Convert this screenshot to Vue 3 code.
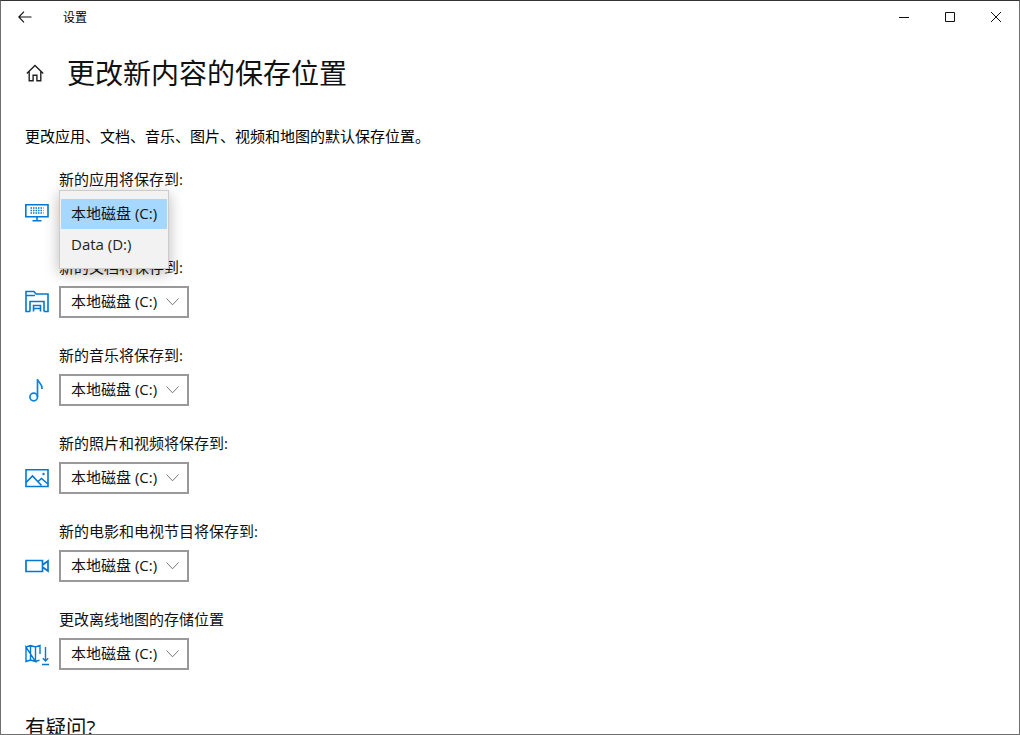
<script setup>
const rows = [
  { label: '新的应用将保存到:', icon: 'apps', open: true },
  { label: '新的文档将保存到:', icon: 'docs' },
  { label: '新的音乐将保存到:', icon: 'music' },
  { label: '新的照片和视频将保存到:', icon: 'photo' },
  { label: '新的电影和电视节目将保存到:', icon: 'video' },
  { label: '更改离线地图的存储位置', icon: 'map' },
]
</script>

<template>
  <div class="window">
    <header class="titlebar">
      <svg class="back" width="14" height="12" viewBox="0 0 14 12"><path d="M6 .6.800 6 6 11.400M.800 6H13.500" fill="none" stroke="#111" stroke-width="1.100"/></svg>
      <span class="title">设置</span>
      <div class="controls">
        <span class="ctl"><svg width="12" height="12" viewBox="0 0 12 12"><path d="M1 6.500H11" stroke="#111" fill="none"/></svg></span>
        <span class="ctl"><svg width="12" height="12" viewBox="0 0 12 12"><path d="M1.500 1.500H10.500V10.500H1.500Z" stroke="#111" fill="none"/></svg></span>
        <span class="ctl"><svg width="12" height="12" viewBox="0 0 12 12"><path d="M1 1 11 11M11 1 1 11" stroke="#111" fill="none"/></svg></span>
      </div>
    </header>

    <main class="content">
      <div class="heading">
        <svg class="home" width="18" height="18" viewBox="0 0 18 18"><path d="M.8 9.400 9 1.400l8.200 8M3.200 7.500v9.300h3.900v-5.600h3.800v5.600h3.900V7.500" fill="none" stroke="#222" stroke-width="1.400"/></svg>
        <h1>更改新内容的保存位置</h1>
      </div>
      <p class="desc">更改应用、文档、音乐、图片、视频和地图的默认保存位置。</p>

      <section v-for="row in rows" :key="row.icon" class="row">
        <div class="label">{{ row.label }}</div>
        <div class="control">
          <span class="icon">
            <svg v-if="row.icon === 'apps'" width="24" height="24" viewBox="0 0 24 24" fill="none" stroke="#0078d7" stroke-width="1.600">
              <path d="M.8 2.800H23V14.800H.8ZM12 14.800V18.500M7.500 18.800H16.500"/>
              <path d="M5.500 6H18.500M5.500 8.500H18.500M5.500 11H18.500" stroke-width="1.500" stroke-dasharray="1.500 1"/>
            </svg>
            <svg v-else-if="row.icon === 'docs'" width="24" height="24" viewBox="0 0 24 24" fill="none" stroke="#0078d7" stroke-width="1.600">
              <path d="M5 21.500H1V1.500H9L11 4H23V21.500H19M1 5.500H10"/>
              <path d="M5 21.500V11.500H19V21.500M8.500 21.500V15.500H15.500V21.500M8 18.500H16"/>
            </svg>
            <svg v-else-if="row.icon === 'music'" width="24" height="24" viewBox="0 0 24 24" fill="none" stroke="#0a84e0" stroke-width="1.700">
              <circle cx="8.700" cy="19" r="3.800"/>
              <path d="M12.500 19V1C13 4.500 17.500 5.500 17 11"/>
            </svg>
            <svg v-else-if="row.icon === 'photo'" width="24" height="24" viewBox="0 0 24 24" fill="none" stroke="#0078d7" stroke-width="1.600">
              <path d="M1 3.800H23V20.500H1Z"/>
              <path d="M1 16.500 7.500 10 16.500 19.500M13 15.500 16.500 12.500 23 18"/>
              <circle cx="18.500" cy="8" r="1.200" fill="#0078d7" stroke="none"/>
            </svg>
            <svg v-else-if="row.icon === 'video'" width="24" height="24" viewBox="0 0 24 24" fill="none" stroke="#0078d7" stroke-width="1.700">
              <path d="M1 6.500H17.500V17.500H1ZM17.500 11 23 7V17L17.500 13"/>
            </svg>
            <svg v-else width="24" height="24" viewBox="0 0 24 24" fill="none" stroke="#0078d7" stroke-width="1.400">
              <path d="M1 5 5.500 3.500 10.500 5 15 3.500V12M5.500 3.500V17.500M10.500 5V19.500M10.500 19.500 5.500 18 1 19.500V5ZM10.500 19.500 14.500 18.200"/>
              <path d="M20.500 5V19M17.800 16.300 20.500 19 23.200 16.300M17 22.500H24"/>
            </svg>
          </span>
          <div v-if="!row.open" class="select">
            <span class="value">本地磁盘 (C:)</span>
            <svg width="13" height="8" viewBox="0 0 13 8"><path d="M.5.500 6.500 6.800 12.500.5" fill="none" stroke="#777" stroke-width="1"/></svg>
          </div>
          <ul v-if="row.open" class="menu">
            <li class="selected">本地磁盘 (C:)</li>
            <li>Data (D:)</li>
          </ul>
        </div>
      </section>

      <h2>有疑问?</h2>
    </main>
  </div>
</template>

<style>
html, body { margin: 0; background: #fff; overflow: hidden; }
</style>

<style scoped>
.window {
  box-sizing: border-box;
  width: 1020px;
  height: 735px;
  overflow: hidden;
  background: #fff;
  border: 1px solid #6f6f6f;
  border-top-color: #333;
  color: #000;
  font-family: "Open Sans", "Noto Sans CJK SC", sans-serif;
  font-size: 15px;
}
.titlebar { height: 31px; display: flex; align-items: center; position: relative; padding-top: 2px; box-sizing: border-box; }
.back { margin-left: 17px; margin-top: -1px; }
.title { margin-left: 31px; font-size: 12px; line-height: 16px; }
.controls { margin-left: auto; display: flex; margin-top: -1px; }
.ctl { width: 46px; height: 30px; display: flex; align-items: center; justify-content: center; }
.content { padding-left: 24px; }
.heading { display: flex; align-items: center; height: 40px; margin-top: 21px; }
.home { margin-left: 1px; }
h1 { margin: 0 0 0 23px; font-size: 28px; font-weight: 400; line-height: 40px; color: #111; }
.desc { margin: 33px 0 0; line-height: 20px; }
.row { margin-top: 23px; height: 65px; }
.label { padding-left: 34px; line-height: 20px; height: 20px; color: #111; }
.control { display: flex; align-items: center; height: 32px; margin-top: 9px; position: relative; }
.icon { width: 34px; height: 24px; display: flex; }
.select {
  box-sizing: border-box;
  width: 130px;
  height: 32px;
  border: 2px solid #999;
  padding: 0 8px 0 10px;
  display: flex;
  align-items: center;
  justify-content: space-between;
  line-height: 20px;
  color: #111;
}
.value { margin-top: -2px; }
.menu {
  position: absolute;
  left: 34px;
  top: -8px;
  box-sizing: border-box;
  width: 110px;
  height: 79px;
  margin: 0;
  padding: 8px 1px;
  list-style: none;
  background: #f2f2f2;
  border: 1px solid #ccc;
  box-shadow: 0 4px 14px rgba(0, 0, 0, .28);
  z-index: 2;
}
.menu li { height: 30px; line-height: 30px; padding-left: 10px; color: #222; }
.menu .selected { background: #a6d8ff; color: #111; line-height: 28px; }
h2 { margin: 39px 0 0; font-size: 20.5px; font-weight: 400; line-height: 28px; color: #111; }
</style>
